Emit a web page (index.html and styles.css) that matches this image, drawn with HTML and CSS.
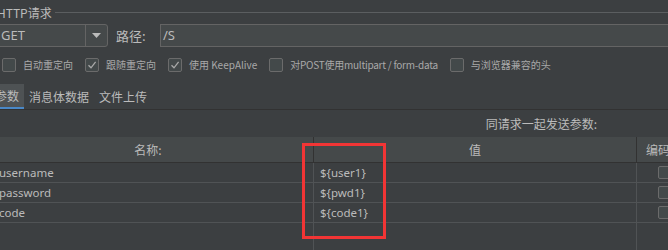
FILE: index.html
```html
<!DOCTYPE html>
<html lang="zh">
<head>
<meta charset="utf-8">
<title>HTTP请求</title>
<link rel="stylesheet" href="styles.css">
</head>
<body>
<div class="panel">
  <div class="legend">
    <span class="legend-text">HTTP请求</span>
    <span class="legend-line"></span>
  </div>

  <div class="req-row">
    <div class="combo">
      <span class="combo-value">GET</span>
      <span class="combo-btn">
        <svg width="9" height="5" viewBox="0 0 9 5"><path d="M0 0 H9 L4.5 5 Z" fill="#bbbbbb"/></svg>
      </span>
    </div>
    <span class="path-label">路径:</span>
    <div class="path-field">/S</div>
  </div>

  <div class="checks">
    <label class="check"><span class="box"></span><span class="check-text">自动重定向</span></label>
    <label class="check"><span class="box checked"><svg width="10" height="10" viewBox="0 0 10 10"><path d="M1.5 5.2 L4 7.8 L8.6 1.8" fill="none" stroke="#a9a9a9" stroke-width="1.3"/></svg></span><span class="check-text">跟随重定向</span></label>
    <label class="check"><span class="box checked"><svg width="10" height="10" viewBox="0 0 10 10"><path d="M1.5 5.2 L4 7.8 L8.6 1.8" fill="none" stroke="#a9a9a9" stroke-width="1.3"/></svg></span><span class="check-text">使用 KeepAlive</span></label>
    <label class="check"><span class="box"></span><span class="check-text narrow">对POST使用multipart / form-data</span></label>
    <label class="check"><span class="box"></span><span class="check-text">与浏览器兼容的头</span></label>
  </div>

  <div class="tabs">
    <span class="tab active">参数</span>
    <span class="tab">消息体数据</span>
    <span class="tab">文件上传</span>
  </div>

  <div class="params-title">同请求一起发送参数:</div>

  <div class="table">
    <div class="th c1">名称:</div>
    <div class="th c2">值</div>
    <div class="th c3">编码</div>

    <div class="td c1">username</div>
    <div class="td c2">${user1}</div>
    <div class="td c3"><span class="cb"></span></div>

    <div class="td c1">password</div>
    <div class="td c2">${pwd1}</div>
    <div class="td c3"><span class="cb"></span></div>

    <div class="td c1">code</div>
    <div class="td c2">${code1}</div>
    <div class="td c3"><span class="cb"></span></div>

    <div class="fill c1"></div>
    <div class="fill c2"></div>
    <div class="fill c3"></div>
  </div>

  <div class="highlight"></div>
</div>
</body>
</html>
```

FILE: styles.css
```css
* { box-sizing: border-box; }

html, body {
  margin: 0;
  padding: 0;
  width: 668px;
  height: 250px;
  overflow: hidden;
  background: #3c3f41;
}

body {
  font-family: "Noto Sans", "Noto Sans CJK SC", sans-serif;
  color: #bbbbbb;
}

.panel {
  position: relative;
  width: 668px;
  height: 250px;
  display: flex;
  flex-direction: column;
}

/* legend */
.legend {
  height: 24px;
  display: flex;
  align-items: center;
  margin-left: -3px;
}
.legend-text {
  font-size: 12px;
  line-height: 14px;
  margin-top: 2px;
  font-family: "Noto Sans CJK SC", sans-serif;
}
.legend-line {
  flex: 1;
  height: 1px;
  background: #5b5e60;
  margin-left: 3px;
  margin-top: 1px;
}

/* request row */
.req-row {
  height: 23px;
  display: flex;
  align-items: stretch;
}
.combo {
  width: 120px;
  margin-left: -12px;
  border: 1px solid #646464;
  border-radius: 3px;
  background: #45494a;
  display: flex;
}
.combo-value {
  flex: 1;
  padding-left: 12px;
  font-size: 13px;
  line-height: 21px;
}
.combo-btn {
  width: 22px;
  border-left: 1px solid #646464;
  display: flex;
  align-items: center;
  justify-content: center;
}
.path-label {
  margin-left: 8px;
  width: 44px;
  font-size: 13px;
  line-height: 23px;
  font-family: "Noto Sans CJK SC", sans-serif;
}
.path-field {
  flex: 1;
  margin-right: -10px;
  border: 1px solid #646464;
  background: #45494a;
  font-size: 13px;
  line-height: 21px;
  padding-left: 2px;
}

/* checkboxes */
.checks {
  margin-top: 11px;
  height: 14px;
  display: flex;
  align-items: center;
  gap: 12px;
  padding-left: 2px;
}
.check {
  display: flex;
  align-items: center;
  gap: 7px;
}
.box {
  width: 14px;
  height: 14px;
  border: 1px solid #6b6b6b;
  border-radius: 2px;
  background: #43494a;
  display: flex;
  align-items: center;
  justify-content: center;
}
.check-text {
  font-size: 10px;
  line-height: 14px;
  font-family: "Noto Sans CJK SC", sans-serif;
  color: #a9a9a9;
}
.check-text.narrow {
  letter-spacing: -0.25px;
}

/* tabs */
.tabs {
  margin-top: 12px;
  height: 26px;
  display: flex;
  border-bottom: 1px solid #323232;
}
.tab {
  padding: 0 5px;
  font-size: 12px;
  line-height: 25px;
  font-family: "Noto Sans CJK SC", sans-serif;
}
.tab.active {
  margin-left: -10px;
  background: #4e5254;
  border-bottom: 2px solid #4a88c7;
  line-height: 23px;
}

.params-title {
  height: 27px;
  text-align: right;
  padding-right: 71px;
  font-size: 12px;
  line-height: 27px;
  font-family: "Noto Sans CJK SC", sans-serif;
}

/* table */
.table {
  flex: 1;
  margin-left: -17px;
  display: grid;
  grid-template-columns: 331px 323px 60px;
  grid-template-rows: 26px 20px 20px 20px 1fr;
}
.th {
  background: #45494a;
  border-bottom: 1px solid #323232;
  font-size: 12px;
  line-height: 25px;
  text-align: center;
  font-family: "Noto Sans CJK SC", sans-serif;
}
.th.c1, .th.c2 { border-right: 1px solid #323232; }
.th.c3 { text-align: left; padding-left: 9px; }

.td {
  border-bottom: 1px solid #505355;
  font-size: 11.5px;
  line-height: 19px;
  display: flex;
  align-items: center;
}
.td.c1 { padding-left: 16px; border-right: 1px solid #505355; }
.td.c2 { padding-left: 6px; border-right: 1px solid #505355; }
.td.c3 { padding-left: 21px; }

.fill.c1, .fill.c2 { border-right: 1px solid #505355; }

.cb {
  width: 13px;
  height: 13px;
  border: 1px solid #6b6b6b;
  border-radius: 2px;
  background: #43494a;
}

.highlight {
  position: absolute;
  left: 302px;
  top: 143px;
  width: 84px;
  height: 96px;
  border: 3px solid #f23535;
}
```
